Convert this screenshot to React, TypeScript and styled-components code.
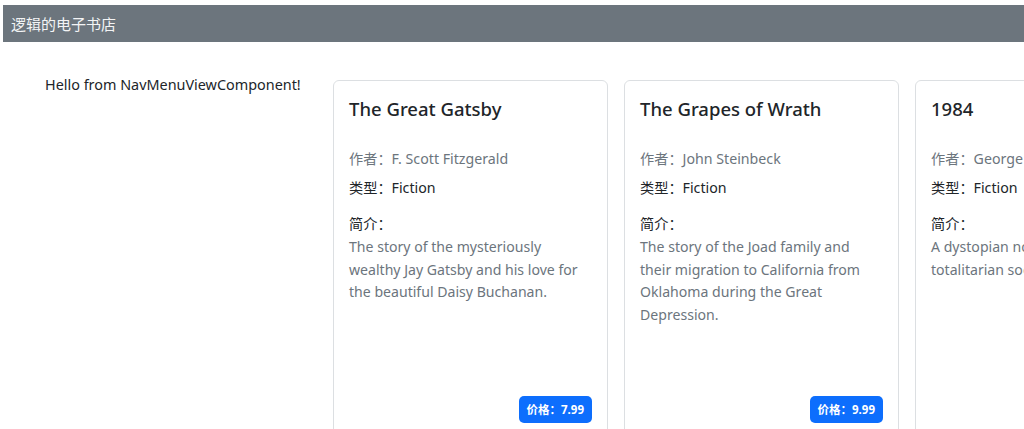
import React from 'react';
import styled, { createGlobalStyle } from 'styled-components';

interface Book {
  title: string;
  author: string;
  genre: string;
  summary: string;
  price: string;
}

const books: Book[] = [
  {
    title: 'The Great Gatsby',
    author: 'F. Scott Fitzgerald',
    genre: 'Fiction',
    summary: 'The story of the mysteriously wealthy Jay Gatsby and his love for the beautiful Daisy Buchanan.',
    price: '7.99',
  },
  {
    title: 'The Grapes of Wrath',
    author: 'John Steinbeck',
    genre: 'Fiction',
    summary: 'The story of the Joad family and their migration to California from Oklahoma during the Great Depression.',
    price: '9.99',
  },
  {
    title: '1984',
    author: 'George Orwell',
    genre: 'Fiction',
    summary: 'A dystopian novel set in a totalitarian society.',
    price: '8.99',
  },
];

const GlobalStyle = createGlobalStyle`
  html, body {
    margin: 0;
    padding: 0;
    background: #fff;
    overflow: hidden;
  }
  body {
    font-family: "Noto Sans", "Noto Sans CJK SC", sans-serif;
    color: #212529;
  }
`;

export default function App() {
  return (
    <>
      <GlobalStyle />
      <Page>
        <NavBar>
          <Brand>逻辑的电子书店</Brand>
        </NavBar>
        <Main>
          <Sidebar>Hello from NavMenuViewComponent!</Sidebar>
          <CardRow>
            {books.map(b => (
              <Card key={b.title}>
                <CardTitle>{b.title}</CardTitle>
                <InfoLine muted>作者：{b.author}</InfoLine>
                <InfoLine>类型：{b.genre}</InfoLine>
                <SummaryLabel>简介：</SummaryLabel>
                <Summary>{b.summary}</Summary>
                <Footer>
                  <PriceBadge>价格：{b.price}</PriceBadge>
                </Footer>
              </Card>
            ))}
          </CardRow>
        </Main>
      </Page>
    </>
  );
}

const Page = styled.div`
  width: 1024px;
  height: 429px;
  overflow: hidden;
  padding: 5px 0 0 3px;
  box-sizing: border-box;
`;

const NavBar = styled.div`
  height: 37px;
  background-color: #6c757d;
  display: flex;
  align-items: center;
  padding-left: 8px;
`;

const Brand = styled.span`
  color: #f3f4f5;
  font-size: 15px;
`;

const Main = styled.div`
  display: flex;
  padding: 38px 0 0 42px;
`;

const Sidebar = styled.div`
  width: 288px;
  flex-shrink: 0;
  font-size: 14.4px;
  line-height: 20px;
  margin-top: -5px;
`;

const CardRow = styled.div`
  display: flex;
  gap: 16px;
  overflow: hidden;
  flex: 1;
`;

const Card = styled.div`
  width: 275px;
  height: 360px;
  flex-shrink: 0;
  box-sizing: border-box;
  border: 1px solid #dcdfe2;
  border-radius: 6px;
  padding: 16px 15px;
  display: flex;
  flex-direction: column;
`;

const CardTitle = styled.div`
  font-size: 18.5px;
  font-weight: 500;
  line-height: 24px;
  margin-bottom: 28px;
`;

const InfoLine = styled.div<{ muted?: boolean }>`
  font-size: 14.2px;
  line-height: 20px;
  margin-bottom: 9px;
  color: ${p => (p.muted ? '#6c757d' : '#212529')};
`;

const SummaryLabel = styled.div`
  font-size: 14.2px;
  line-height: 20px;
  margin-top: 7px;
  margin-bottom: 2px;
`;

const Summary = styled.div`
  font-size: 14.1px;
  line-height: 22.7px;
  color: #6c757d;
`;

const Footer = styled.div`
  margin-top: auto;
  display: flex;
  justify-content: flex-end;
`;

const PriceBadge = styled.span`
  background-color: #0d6efd;
  color: #fff;
  font-size: 11.5px;
  font-weight: 700;
  border-radius: 5px;
  padding: 5px 8px;
  line-height: 17px;
`;
